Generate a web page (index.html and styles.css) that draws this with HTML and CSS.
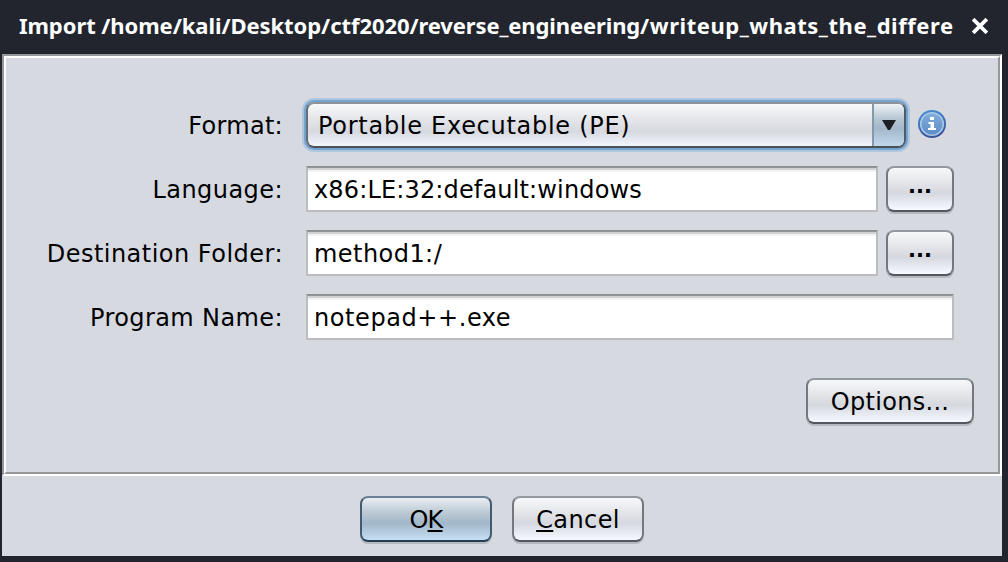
FILE: index.html
```
<!DOCTYPE html>
<html lang="en">
<head>
<meta charset="utf-8">
<title>Import</title>
<link rel="stylesheet" href="styles.css">
</head>
<body>
<div class="window">
  <header class="titlebar">
    <span class="title">Import /home/kali/Desktop/ctf2020<span class="dir">/reverse_engineering</span><span class="file">/writeup_whats_the_differe</span></span>
    <svg class="close" width="16" height="16" viewBox="0 0 16 16"><path d="M2.5 2.5L13.5 13.5M13.5 2.5L2.5 13.5" stroke="#fff" stroke-width="3.8" stroke-linecap="square"/></svg>
  </header>
  <main class="panel">
    <div class="panel-inner">
      <div class="form">
        <div class="row">
          <label class="label l-format">Format:</label>
          <div class="combo">
            <span class="combo-text">Portable Executable (PE)</span>
            <span class="combo-arrow"><svg width="14" height="10" viewBox="0 0 14 10"><path d="M0 0H14L8 10H6Z" fill="#1c2024"/></svg></span>
          </div>
          <svg class="info" width="28" height="28" viewBox="0 0 28 28">
            <defs>
              <linearGradient id="ring" x1="0" y1="0" x2="0.3" y2="1"><stop offset="0" stop-color="#4795d6"/><stop offset="1" stop-color="#38539b"/></linearGradient>
              <linearGradient id="disc" x1="0" y1="0" x2="0" y2="1"><stop offset="0" stop-color="#83afdd"/><stop offset="1" stop-color="#5b8bc6"/></linearGradient>
            </defs>
            <circle cx="14" cy="14" r="14" fill="url(#ring)"/>
            <circle cx="14" cy="14" r="11.3" fill="url(#disc)" stroke="#a9c7e7" stroke-width="1.6"/>
            <path d="M12 7H16V10H12ZM10.5 12H16V18H18V20H10V18H12.5V14H10.5Z" fill="#fff"/>
          </svg>
        </div>
        <div class="row">
          <label class="label l-language">Language:</label>
          <div class="field f-language">x86:LE:32:default:windows</div>
          <div class="button browse">...</div>
        </div>
        <div class="row">
          <label class="label l-folder">Destination Folder:</label>
          <div class="field f-folder">method1:/</div>
          <div class="button browse">...</div>
        </div>
        <div class="row">
          <label class="label l-name">Program Name:</label>
          <div class="field f-name">notepad++.exe</div>
        </div>
      </div>
      <div class="options-row"><div class="button options">Options...</div></div>
    </div>
  </main>
  <footer class="footer">
    <div class="button primary"><span>O<span class="key">K</span></span></div>
    <div class="button cancel"><span><span class="key">C</span>ancel</span></div>
  </footer>
</div>
</body>
</html>
```
FILE: styles.css
```
* { box-sizing: border-box; }
body { margin: 0; background: #22252e; font-family: "DejaVu Sans", sans-serif; font-size: 24px; color: #000; }
.window { width: 1008px; height: 562px; padding: 0 6px 6px 2px; display: flex; flex-direction: column; overflow: hidden; }
.titlebar { height: 54px; display: flex; align-items: center; padding: 0 14px 2px 17px; justify-content: space-between; flex: none; }
.title { font-family: "Noto Sans", sans-serif; font-weight: 700; font-size: 22px; letter-spacing: -0.07px; color: #fff; white-space: nowrap; padding-bottom: 2px; }
.dir { letter-spacing: -0.12px; }
.file { letter-spacing: 0.54px; }
.close { flex: none; }
.panel { height: 422px; flex: none; border: 2px solid; border-color: #95979d #fff #fff #95979d; }
.panel-inner { height: 418px; background: #d6d9e0; border: 2px solid; border-color: #fff #95979d #95979d #fff; padding-top: 44px; }
.form { display: flex; flex-direction: column; gap: 18px; }
.row { display: flex; height: 46px; align-items: center; }
.label { width: 277px; margin-right: 23px; text-align: right; white-space: nowrap; line-height: 46px; padding-top: 1px; height: 46px; }
.l-format { letter-spacing: 0.3px; }
.l-language { letter-spacing: 0.45px; }
.l-folder { letter-spacing: 0.48px; }
.l-name { letter-spacing: 0.4px; }
.combo { width: 600px; height: 46px; border: 2px solid; border-color: #8f9199 #4e5c69 #4c5057 #686c74; border-radius: 8px; box-shadow: 0 0 0 2px #73a4d1, 0 0 0 4px #afc6df; background: linear-gradient(#f8f9fb, #e4e6ea 35%, #d6d9df 65%, #f1f5fd); display: flex; justify-content: space-between; overflow: hidden; }
.combo-text { padding-left: 10px; line-height: 44px; letter-spacing: 0.72px; white-space: nowrap; }
.combo-arrow { width: 32px; border-left: 2px solid #8499aa; background: linear-gradient(#edf2f6, #b7c7d4 35%, #a3b8ca 58%, #c1d8ec); display: flex; align-items: center; justify-content: center; }
.info { margin-left: 12px; margin-bottom: 2px; }
.field { width: 572px; height: 46px; border: 2px solid #bbbcbd; border-top-color: #8f9193; background: linear-gradient(#d1d1d1 2px, #f3f3f3 2px, #f3f3f3 4px, #fff 4px); padding-left: 6px; line-height: 44px; white-space: nowrap; }
.f-language { letter-spacing: 0.15px; }
.f-folder { letter-spacing: 0.45px; }
.f-name { width: 648px; letter-spacing: 0.58px; }
.button { height: 46px; border: 2px solid; border-color: #93989f #74787e #54575d #74787e; border-radius: 8px; box-shadow: 0 2px 0 #b5b9bf; background: linear-gradient(#f7f8fa, #e3e5e9 35%, #d5d8df 60%, #f6f9ff); display: flex; align-items: center; justify-content: center; white-space: nowrap; line-height: 42px; padding-top: 2px; }
.browse { width: 68px; margin-left: 8px; font-weight: 700; font-size: 21px; padding: 0 0 7px; }
.options-row { display: flex; justify-content: flex-end; padding: 38px 24px 0 0; }
.options { width: 168px; letter-spacing: 0.3px; }
.footer { flex: 1; background: #d6d9e0; display: flex; justify-content: center; gap: 20px; padding-top: 20px; }
.primary { width: 132px; letter-spacing: -0.8px; border-color: #6b8193 #425b70 #243f54 #425b70; background: linear-gradient(#e9eef2, #bbc9d4 35%, #a2b7c9 60%, #c7dff4); }
.cancel { width: 132px; letter-spacing: 0.4px; }
.key { text-decoration: underline; text-decoration-thickness: 2px; text-underline-offset: 2px; text-decoration-skip-ink: none; }
```
